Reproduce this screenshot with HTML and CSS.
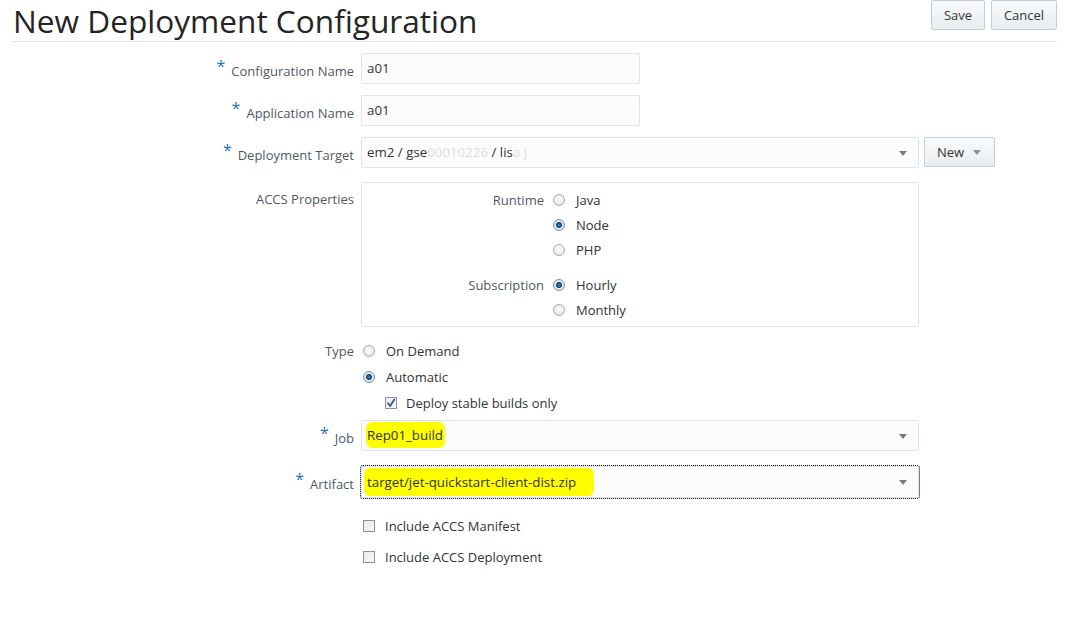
FILE: index.html
```html
<!DOCTYPE html>
<html>
<head>
<meta charset="utf-8">
<link rel="stylesheet" href="styles.css">
</head>
<body>
<div class="header">
  <h1 class="title">New Deployment Configuration</h1>
  <div class="actions">
    <button class="btn">Save</button>
    <button class="btn">Cancel</button>
  </div>
</div>

<div class="form">
  <div class="row row-first">
    <label class="lbl"><span class="req">*</span>Configuration Name</label>
    <div class="field"><div class="input input-short">a01</div></div>
  </div>
  <div class="row row-gap">
    <label class="lbl"><span class="req">*</span>Application Name</label>
    <div class="field"><div class="input input-short">a01</div></div>
  </div>
  <div class="row row-gap">
    <label class="lbl"><span class="req">*</span>Deployment Target</label>
    <div class="field field-inline">
      <div class="input select">em2 / gse<span class="blur">00010226</span> / lis<span class="blur">a j</span><span class="arrow"></span></div>
      <button class="btn btn-new">New<span class="arrow arrow-btn"></span></button>
    </div>
  </div>
  <div class="row row-accs">
    <label class="lbl lbl-plain lbl-accs">ACCS Properties</label>
    <div class="field">
      <div class="accs">
        <div class="sub">
          <div class="sub-lbl">Runtime</div>
          <div class="opts">
            <div class="opt"><span class="radio"></span>Java</div>
            <div class="opt"><span class="radio on"></span>Node</div>
            <div class="opt"><span class="radio"></span>PHP</div>
          </div>
        </div>
        <div class="sub sub-gap">
          <div class="sub-lbl">Subscription</div>
          <div class="opts">
            <div class="opt"><span class="radio on"></span>Hourly</div>
            <div class="opt"><span class="radio"></span>Monthly</div>
          </div>
        </div>
      </div>
    </div>
  </div>
  <div class="row row-type">
    <label class="lbl lbl-plain lbl-type">Type</label>
    <div class="field">
      <div class="opt opt-t"><span class="radio"></span>On Demand</div>
      <div class="opt opt-t"><span class="radio on"></span>Automatic</div>
      <div class="opt opt-c indent"><span class="check on"><svg viewBox="0 0 12 12" width="12" height="12"><path d="M3 6.2 L5.2 9 L9.3 2.6" fill="none" stroke="#3a55a8" stroke-width="1.8" stroke-linecap="round" stroke-linejoin="round"/></svg></span>Deploy stable builds only</div>
    </div>
  </div>
  <div class="row row-job">
    <label class="lbl"><span class="req">*</span>Job</label>
    <div class="field"><div class="input select"><span class="hl hl-job">Rep01_build</span><span class="arrow"></span></div></div>
  </div>
  <div class="row row-art">
    <label class="lbl"><span class="req">*</span>Artifact</label>
    <div class="field"><div class="input select focus"><span class="hl hl-art">target/jet-quickstart-client-dist.zip</span><span class="arrow"></span></div></div>
  </div>
  <div class="row row-inc">
    <div class="lbl"></div>
    <div class="field">
      <div class="opt opt-i"><span class="check"></span>Include ACCS Manifest</div>
      <div class="opt opt-i opt-i2"><span class="check"></span>Include ACCS Deployment</div>
    </div>
  </div>
</div>
</body>
</html>
```

FILE: styles.css
```css
html, body {
  margin: 0;
  padding: 0;
  background: #ffffff;
}
body {
  font-family: "Open Sans", "Noto Sans", "Liberation Sans", sans-serif;
  font-size: 13px;
  color: #333333;
}
.header {
  display: flex;
  justify-content: space-between;
  align-items: flex-start;
  margin: 0 14px 0 12px;
  border-bottom: 1px solid #dfe4e8;
  height: 41px;
}
.title {
  margin: 0;
  font-size: 31.6px;
  font-weight: 400;
  line-height: 41px;
  color: #252525;
  padding-left: 1px;
}
.actions {
  display: flex;
  gap: 6px;
}
.btn {
  font-family: inherit;
  font-size: 13px;
  color: #333;
  height: 30px;
  padding: 0 12px;
  border: 1px solid #c4ced7;
  border-radius: 2px;
  background: linear-gradient(#f9fafb, #e9edf0);
  cursor: pointer;
}
.actions .btn:first-child { width: 54px; padding: 0; }
.actions .btn:last-child { width: 66px; padding: 0; }

.form {
  margin-top: 11px;
}
.row {
  display: flex;
  gap: 7px;
}
.row-gap { margin-top: 11px; }
.lbl {
  width: 354px;
  flex: none;
  text-align: right;
  color: #4f5a63;
  height: 31px;
  line-height: 28px;
  padding-top: 3px;
  box-sizing: border-box;
  white-space: nowrap;
}
.req {
  color: #1a73c9;
  font-size: 16px;
  margin-right: 6px;
  position: relative;
  top: -4px;
}
.field {
  flex: none;
}
.field-inline {
  display: flex;
  gap: 5px;
}
.input {
  height: 31px;
  box-sizing: border-box;
  border: 1px solid #dfe4e8;
  border-radius: 2px;
  background: #fbfcfd;
  padding: 0 5px;
  line-height: 29px;
  color: #333;
  font-size: 13.3px;
  position: relative;
}
.input-short { width: 279px; }
.select { width: 558px; }
.blur { color: #dcdcdc; }
.arrow {
  position: absolute;
  right: 11px;
  top: 13px;
  width: 0;
  height: 0;
  border-left: 4px solid transparent;
  border-right: 4px solid transparent;
  border-top: 5px solid #7b7b7b;
}
.btn-new {
  width: 71px;
  height: 30px;
  text-align: left;
  padding-left: 12px;
  position: relative;
}
.arrow-btn {
  right: 13px;
  top: 12px;
  border-top-color: #909090;
}

.row-accs { margin-top: 14px; }
.lbl-accs { padding-top: 2px; line-height: 30px; }
.accs {
  width: 558px;
  box-sizing: border-box;
  border: 1px solid #dfe4e8;
  border-radius: 2px;
  padding: 4px 0 4px 0;
}
.sub { display: flex; }
.sub-gap { margin-top: 10px; }
.sub-lbl {
  width: 182px;
  text-align: right;
  color: #4f5a63;
  line-height: 25px;
  padding-top: 1px;
  box-sizing: border-box;
}
.opts { margin-left: 9px; }
.opt {
  display: flex;
  align-items: center;
  height: 25px;
  color: #333;
  white-space: nowrap;
}
.radio {
  width: 12px;
  height: 12px;
  box-sizing: border-box;
  border-radius: 50%;
  border: 1px solid #a9adb1;
  background: radial-gradient(circle at 50% 40%, #ffffff 0%, #f1f1f1 45%, #d7d9db 100%);
  margin-right: 11px;
  flex: none;
  position: relative;
}
.radio.on {
  border-color: #7f8c97;
  background: radial-gradient(circle at 50% 50%, #2c86c9 0%, #1a5f98 28%, #123e66 38%, #eef0f2 48%, #d2d6da 100%);
}

.row-type { margin-top: 11px; }
.lbl-type { line-height: 26px; padding-top: 0; height: 26px; }
.opt-t { height: 26px; }
.opt-t .radio { margin-left: 2px; }
.opt-c { height: 25px; }
.indent { padding-left: 24px; }
.check {
  width: 12px;
  height: 12px;
  box-sizing: border-box;
  border: 1px solid #8f9295;
  background: linear-gradient(135deg, #e8e9ea, #f8f8f8);
  margin-right: 9px;
  flex: none;
  position: relative;
}
.check svg {
  position: absolute;
  left: -1px;
  top: -1px;
}

.row-job { margin-top: 5px; }
.row-art { margin-top: 15px; }
.row-art .input { height: 32px; line-height: 30px; }
.row-art .lbl { height: 32px; line-height: 29px; }
.focus { outline: 1px dotted #000; outline-offset: 0; }
.hl {
  background: #ffff00;
  border-radius: 6px;
  padding: 4px 2px 4px 1px;
  margin-left: -1px;
}
.hl-art { margin-left: -3px; padding-left: 3px; padding-right: 18px; padding-top: 5px; padding-bottom: 5px; }

.row-inc { margin-top: 15px; }
.opt-i .check { margin-left: 2px; margin-right: 10px; }
.opt-i2 { margin-top: 6px; }
```
